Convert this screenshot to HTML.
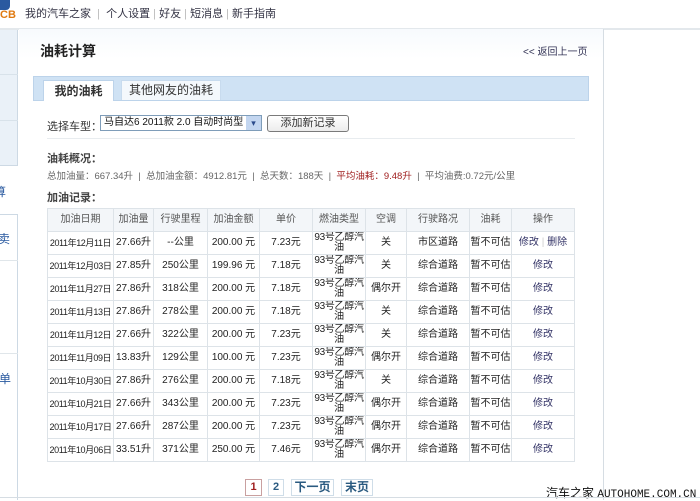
<!DOCTYPE html>
<html><head><meta charset="utf-8"><style>
*{margin:0;padding:0;box-sizing:border-box}
body{width:700px;height:500px;background:#fff;font-family:"Liberation Sans","Noto Sans CJK SC",sans-serif;font-size:12px;color:#333;position:relative;overflow:hidden}
.a{position:absolute;white-space:nowrap}
table{position:absolute;left:47px;top:208px;border-collapse:collapse;font-size:10px;table-layout:fixed;width:527px}
td{border:1px solid #dde3e8;text-align:center;height:23px;padding:0;line-height:10px;color:#222;white-space:nowrap;overflow:hidden}
td.f{white-space:normal;letter-spacing:-0.3px}
td.d{font-size:9px;letter-spacing:-0.4px}
tr.h td{background:#f3f6f9;color:#555;height:23px;font-size:10px;letter-spacing:0}
td.l{color:#336}
</style></head><body>
<div class="a" style="left:0;top:0;width:10px;height:10px;background:#2a5aa0;border-radius:0 0 4px 0"></div>
<div class="a" style="left:0;top:9px;font-size:11px;font-weight:bold;color:#e07a10">CB</div>
<div class="a" style="left:25px;top:5px;font-size:11px;color:#334">我的汽车之家 <span style="color:#bbb">&nbsp;|&nbsp;</span> 个人设置 <span style="color:#bbb">|</span> 好友 <span style="color:#bbb">|</span> 短消息 <span style="color:#bbb">|</span> 新手指南</div>
<div class="a" style="left:0;top:28px;width:700px;height:2px;background:#e3e8ec"></div>
<div class="a" style="left:0;top:30px;width:18px;height:136px;background:#eaf1f8;border-right:1px solid #cdd9e4;border-bottom:1px solid #cdd9e4"></div>
<div class="a" style="left:0;top:74px;width:18px;height:1px;background:#d8e2ea"></div>
<div class="a" style="left:0;top:120px;width:18px;height:1px;background:#d8e2ea"></div>
<div class="a" style="left:-6px;top:183px;color:#2a5aa0;font-size:12px">算</div>
<div class="a" style="left:0;top:214px;width:18px;height:286px;border-right:1px solid #cdd9e4;border-top:1px solid #cdd9e4"></div>
<div class="a" style="left:-2px;top:230px;color:#2a5aa0;font-size:12px">卖</div>
<div class="a" style="left:0;top:260px;width:18px;height:1px;background:#e0e6ea"></div>
<div class="a" style="left:0;top:353px;width:18px;height:1px;background:#e0e6ea"></div>
<div class="a" style="left:-1px;top:370px;color:#2a5aa0;font-size:12px">单</div>
<div class="a" style="left:19px;top:29px;width:585px;height:471px;border-right:1px solid #d6dde3;background:linear-gradient(#f7fafd,#fff 30px)"></div>
<div class="a" style="left:40px;top:41px;font-size:14px;font-weight:bold;color:#222">油耗计算</div>
<div class="a" style="left:523px;top:43px;font-size:10px;color:#335">&lt;&lt; 返回上一页</div>
<div class="a" style="left:33px;top:76px;width:556px;height:25px;background:#cfe2f4;border:1px solid #bcd3ea"></div>
<div class="a" style="left:43px;top:80px;width:71px;height:21px;background:#fff;border:1px solid #bcd3ea;border-bottom:none;text-align:center;line-height:20px;font-weight:bold;font-size:12px">我的油耗</div>
<div class="a" style="left:121px;top:80px;width:100px;height:20px;background:#f4f8fc;border:1px solid #c8dbee;border-bottom:none;text-align:center;line-height:19px;font-size:12px">其他网友的油耗</div>
<div class="a" style="left:47px;top:118px;font-size:11px">选择车型：</div>
<div class="a" style="left:100px;top:115px;width:162px;height:16px;border:1px solid #7f9db9;font-size:10px;line-height:14px;padding-left:3px;color:#111;overflow:hidden">马自达6 2011款 2.0 自动时尚型</div>
<div class="a" style="left:246px;top:116px;width:15px;height:14px;background:#c3d6f0;color:#2a4a8a;font-size:9px;text-align:center;line-height:14px">▾</div>
<div class="a" style="left:267px;top:115px;width:82px;height:17px;border:1px solid #7a7a7a;border-radius:3px;background:linear-gradient(#fff,#ececec);text-align:center;line-height:15px;font-size:11px">添加新记录</div>
<div class="a" style="left:47px;top:138px;width:528px;height:1px;background:#e8ecef"></div>
<div class="a" style="left:47px;top:150px;font-size:11px;font-weight:bold;color:#444">油耗概况：</div>
<div class="a" style="left:47px;top:168px;font-size:9.5px;color:#666">总加油量：667.34升 &nbsp;| &nbsp;总加油金额：4912.81元 &nbsp;| &nbsp;总天数：188天 &nbsp;| &nbsp;<span style="color:#a02020">平均油耗：9.48升</span> &nbsp;| &nbsp;平均油费:0.72元/公里</div>
<div class="a" style="left:47px;top:189px;font-size:11px;font-weight:bold;color:#444">加油记录：</div>
<table>
<colgroup><col style="width:66px"><col style="width:40px"><col style="width:54px"><col style="width:52px"><col style="width:53px"><col style="width:53px"><col style="width:41px"><col style="width:63px"><col style="width:42px"><col style="width:63px"></colgroup>
<tr class="h"><td>加油日期</td><td>加油量</td><td>行驶里程</td><td>加油金额</td><td>单价</td><td>燃油类型</td><td>空调</td><td>行驶路况</td><td>油耗</td><td>操作</td></tr>
<tr><td class="d">2011年12月11日</td><td>27.66升</td><td>--公里</td><td>200.00 元</td><td>7.23元</td><td class="f">93号乙醇汽<br>油</td><td>关</td><td>市区道路</td><td>暂不可估</td><td class="l">修改 <span style="color:#ccc">|</span> 删除</td></tr>
<tr><td class="d">2011年12月03日</td><td>27.85升</td><td>250公里</td><td>199.96 元</td><td>7.18元</td><td class="f">93号乙醇汽<br>油</td><td>关</td><td>综合道路</td><td>暂不可估</td><td class="l">修改</td></tr>
<tr><td class="d">2011年11月27日</td><td>27.86升</td><td>318公里</td><td>200.00 元</td><td>7.18元</td><td class="f">93号乙醇汽<br>油</td><td>偶尔开</td><td>综合道路</td><td>暂不可估</td><td class="l">修改</td></tr>
<tr><td class="d">2011年11月13日</td><td>27.86升</td><td>278公里</td><td>200.00 元</td><td>7.18元</td><td class="f">93号乙醇汽<br>油</td><td>关</td><td>综合道路</td><td>暂不可估</td><td class="l">修改</td></tr>
<tr><td class="d">2011年11月12日</td><td>27.66升</td><td>322公里</td><td>200.00 元</td><td>7.23元</td><td class="f">93号乙醇汽<br>油</td><td>关</td><td>综合道路</td><td>暂不可估</td><td class="l">修改</td></tr>
<tr><td class="d">2011年11月09日</td><td>13.83升</td><td>129公里</td><td>100.00 元</td><td>7.23元</td><td class="f">93号乙醇汽<br>油</td><td>偶尔开</td><td>综合道路</td><td>暂不可估</td><td class="l">修改</td></tr>
<tr><td class="d">2011年10月30日</td><td>27.86升</td><td>276公里</td><td>200.00 元</td><td>7.18元</td><td class="f">93号乙醇汽<br>油</td><td>关</td><td>综合道路</td><td>暂不可估</td><td class="l">修改</td></tr>
<tr><td class="d">2011年10月21日</td><td>27.66升</td><td>343公里</td><td>200.00 元</td><td>7.23元</td><td class="f">93号乙醇汽<br>油</td><td>偶尔开</td><td>综合道路</td><td>暂不可估</td><td class="l">修改</td></tr>
<tr><td class="d">2011年10月17日</td><td>27.66升</td><td>287公里</td><td>200.00 元</td><td>7.23元</td><td class="f">93号乙醇汽<br>油</td><td>偶尔开</td><td>综合道路</td><td>暂不可估</td><td class="l">修改</td></tr>
<tr><td class="d">2011年10月06日</td><td>33.51升</td><td>371公里</td><td>250.00 元</td><td>7.46元</td><td class="f">93号乙醇汽<br>油</td><td>偶尔开</td><td>综合道路</td><td>暂不可估</td><td class="l">修改</td></tr>
</table>
<div class="a" style="left:245px;top:479px;width:17px;height:17px;border:1px solid #c9a0a0;color:#a02020;font-weight:bold;text-align:center;line-height:15px;font-size:11px;background:#fff">1</div>
<div class="a" style="left:268px;top:479px;width:16px;height:17px;border:1px solid #cfdde8;color:#2a5a80;font-weight:bold;text-align:center;line-height:15px;font-size:11px">2</div>
<div class="a" style="left:291px;top:479px;width:43px;height:17px;border:1px solid #cfdde8;color:#2a5a80;font-weight:bold;text-align:center;line-height:15px;font-size:12px">下一页</div>
<div class="a" style="left:341px;top:479px;width:32px;height:17px;border:1px solid #cfdde8;color:#2a5a80;font-weight:bold;text-align:center;line-height:15px;font-size:12px">末页</div>
<div class="a" style="left:546px;top:484px;font-size:12px;color:#111">汽车之家 <span style="font-family:'Liberation Mono',monospace;font-size:11px">AUTOHOME.COM.CN</span></div>
<div class="a" style="left:0;top:497px;width:700px;height:1px;background:#d6dde3"></div>
</body></html>
